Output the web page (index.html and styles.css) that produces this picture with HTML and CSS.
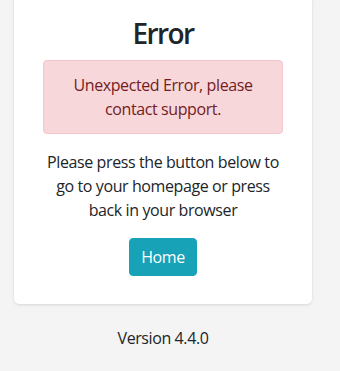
FILE: index.html
```html
<!doctype html>
<html lang="en">
<head>
<title>Error</title>
<meta charset="UTF-8">
<link rel="stylesheet" href="styles.css">
</head>
<body>
    <div class="page">
        <div class="card">
            <h2 class="title">Error</h2>
            <div class="alert">Unexpected Error, please contact support.</div>
            <p class="info">Please press the button below to go to your homepage or press back in your browser</p>
            <div class="actions"><a class="btn" href="#">Home</a></div>
        </div>
        <div class="version">Version 4.4.0</div>
    </div>
</body>
</html>
```

FILE: styles.css
```css
html,body{margin:0;padding:0;}
body{background:#f4f4f4;color:#212529;font-family:"Open Sans","Noto Sans",sans-serif;font-size:16px;line-height:24px;letter-spacing:-0.4px;overflow:hidden;}
.page{width:298px;margin:0 28px 0 14px;}
.card{background:#fff;margin-top:-6px;padding:20px 29px 28px;border-radius:5px;box-shadow:0 1px 3px rgba(0,0,0,.12);text-align:center;}
.title{margin:0 0 8px;font-size:28px;line-height:38px;font-weight:600;letter-spacing:-1.6px;}
.alert{background:#f8d7da;border:1px solid #f5c6cb;color:#721c24;border-radius:4px;padding:12px 20px;}
.info{margin:16px 0;}
.actions{height:38px;}
.btn{display:inline-block;background:#17a2b8;border:1px solid #17a2b8;color:#fff;text-decoration:none;padding:6px 11px;border-radius:4px;line-height:24px;}
.version{text-align:center;margin-top:22px;}
```
